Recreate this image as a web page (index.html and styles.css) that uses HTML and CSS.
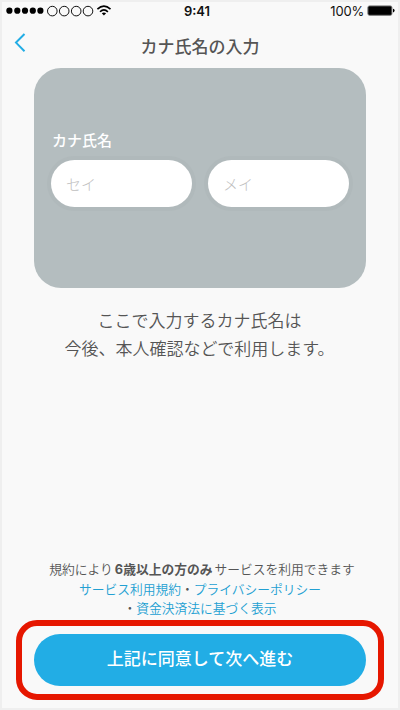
FILE: index.html
```html
<!DOCTYPE html>
<html lang="ja">
<head>
<meta charset="utf-8">
<title>カナ氏名の入力</title>
<link rel="stylesheet" href="styles.css">
</head>
<body>
<div class="screen">
  <div class="status">
    <svg class="signal" width="112" height="16" viewBox="0 0 112 16">
      <g fill="#000"><circle cx="9.4" cy="8.7" r="3.1"/><circle cx="17.3" cy="8.7" r="3.1"/><circle cx="25" cy="8.7" r="3.1"/><circle cx="32.8" cy="8.7" r="3.1"/><circle cx="40.4" cy="8.7" r="3.1"/></g>
      <g fill="none" stroke="#111" stroke-width="1"><circle cx="52.3" cy="9.1" r="4.8"/><circle cx="64.2" cy="9.1" r="4.8"/><circle cx="76.2" cy="9.1" r="4.8"/><circle cx="88" cy="9.1" r="4.8"/></g>
      <g fill="none" stroke="#000" stroke-width="1.6"><path d="M97.4 7.1Q103.9 1 110.5 7.1"/><path d="M100 9.8Q103.9 6 107.9 9.8"/></g>
      <path d="M101.8 11.3Q103.9 9.6 106.1 11.3L103.9 13.5Z"/>
    </svg>
    <span class="time">9:41</span>
    <span class="power">100%
      <svg width="28" height="12" viewBox="0 0 28 12"><rect x=".9" y=".9" width="24" height="9.4" rx="1.6" fill="#000" stroke="#777"/><path d="M26 3.8q1.6.3 1.6 1.8t-1.6 1.8z"/></svg>
    </span>
  </div>
  <header class="header">
    <svg class="back" width="14" height="22" viewBox="0 0 14 22"><path d="M11.5 2L3 10.6L11.5 19.2" fill="none" stroke="#22ade5" stroke-width="2"/></svg>
    <h1>カナ氏名の入力</h1>
  </header>
  <section class="card">
    <div class="label">カナ氏名</div>
    <div class="fields">
      <input type="text" placeholder="セイ">
      <input type="text" placeholder="メイ">
    </div>
  </section>
  <p class="note">ここで入力するカナ氏名は<br>今後、本人確認などで利用します。</p>
  <footer class="footer">
    <p class="terms"><span class="rule">規約により<b>6歳以上の方のみ</b>サービスを利用できます</span><br><a>サービス利用規約</a>・<a>プライバシーポリシー</a><br>・<a>資金決済法に基づく表示</a></p>
    <div class="highlight"><button>上記に同意して次へ進む</button></div>
  </footer>
</div>
</body>
</html>
```
FILE: styles.css
```css
* { box-sizing: border-box; }
body, h1, p { margin: 0; }
body { font-family: Inter, "Noto Sans CJK JP", sans-serif; color: #555; }
.screen {
  width: 400px; height: 710px; border: 2px solid #efefef; background: #f9f9f9;
  display: flex; flex-direction: column; overflow: hidden;
}
.status {
  height: 20px; display: grid; grid-template-columns: 130px 1fr 130px;
  align-items: start; color: #111; font-size: 13px; line-height: 19px;
}
.signal { margin-left: -2px; }
.time { text-align: center; font-weight: 600; font-size: 13px; margin-left: -6px; }
.power { display: flex; justify-content: flex-end; gap: 3px; padding-right: 3px; letter-spacing: -.2px; }
.power svg { margin-top: 3px; }
.header { height: 46px; display: flex; }
.back { margin: 10px 0 0 11px; }
.header h1 {
  flex: 1; margin-right: 25px; padding-top: 13px; text-align: center;
  font-size: 17px; line-height: 25px; font-weight: 500;
}
.card {
  width: 332px; height: 220px; margin: 0 32px; padding: 62px 17px 0;
  border-radius: 27px; background: #b4bdbf; flex: none;
}
.label { padding-left: 1px; color: #fff; font-size: 15px; line-height: 22px; font-weight: 500; }
.fields { display: flex; justify-content: space-between; margin-top: 8px; }
.fields input {
  width: 141px; height: 47px; border: 0; border-radius: 24px; padding: 0 15px 1px;
  background: #fff; box-shadow: 0 0 0 4px #b0b9bb; font: 300 15px "Noto Sans CJK JP", sans-serif;
}
.fields input::placeholder { color: #c0c0c0; opacity: 1; }
.note { margin: 19px 1px 0 0; text-align: center; font-size: 17px; line-height: 28px; font-weight: 350; }
.footer { margin-top: auto; padding: 0 14px 8px; }
.terms { text-align: center; font-size: 12.75px; line-height: 19.6px; white-space: nowrap; margin-bottom: 1px; font-weight: 350; }
.rule { margin-left: 4px; }
.terms b { font-weight: 700; margin: 0 2px; }
.terms a { color: #22a0d2; }
.highlight { height: 80px; border: 6px solid #e61700; border-radius: 21px; padding: 8px 12px; }
.highlight button {
  display: block; width: 100%; height: 52px; border: 0; border-radius: 26px; padding: 0 0 5px;
  background: #22ade5; color: #fff; font: 500 17px "Noto Sans CJK JP", sans-serif;
}
```
